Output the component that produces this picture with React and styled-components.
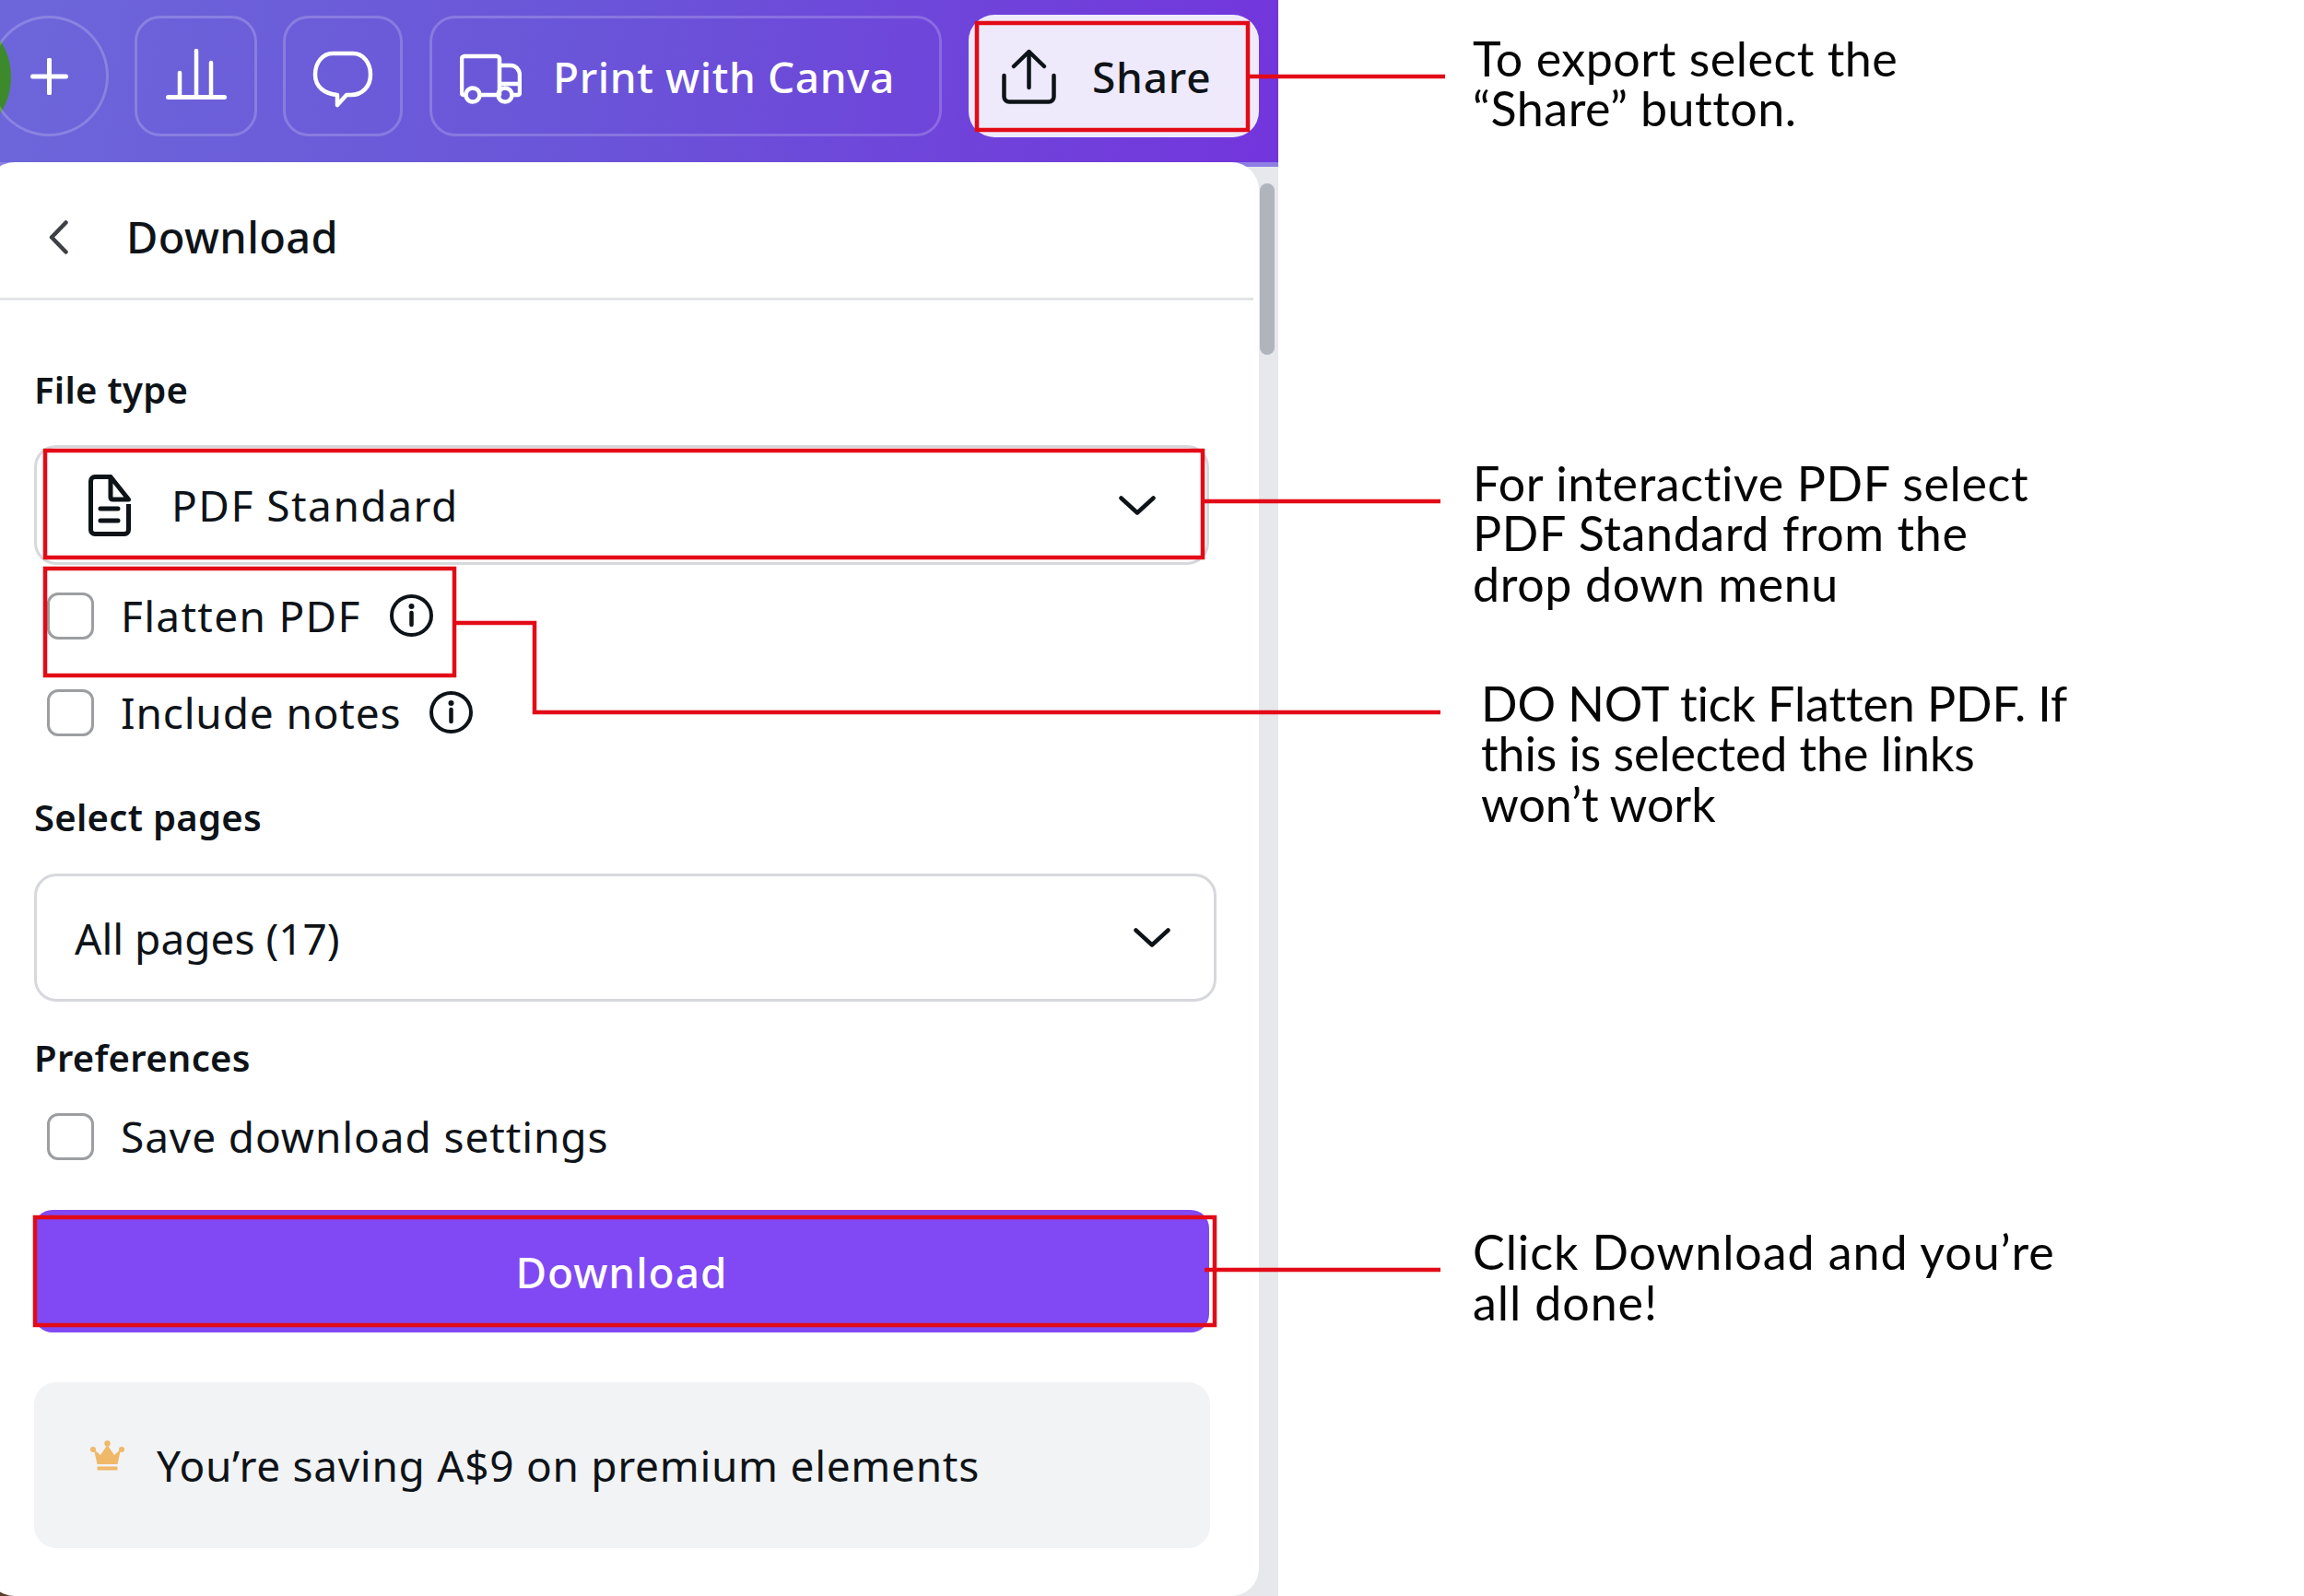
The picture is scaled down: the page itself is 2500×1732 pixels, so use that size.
import React from "react";
import styled, { createGlobalStyle } from "styled-components";

const GlobalStyle = createGlobalStyle`
  html, body {
    margin: 0;
    padding: 0;
    background: #fff;
  }
  * {
    box-sizing: border-box;
  }
`;

const Page = styled.div`
  position: relative;
  display: flex;
  width: 2500px;
  height: 1732px;
  overflow: hidden;
  background: #fff;
  font-family: "Noto Sans", sans-serif;
  color: #0e1318;
`;

const Editor = styled.div`
  display: flex;
  flex-direction: column;
  width: 1387px;
  height: 100%;
`;

const Toolbar = styled.div`
  display: flex;
  align-items: flex-start;
  flex: 0 0 176px;
  padding-top: 17px;
  background: linear-gradient(100deg, #6d66da 0%, #6a55d8 45%, #7335dc 100%);
`;

const Avatar = styled.div`
  flex: 0 0 145px;
  height: 145px;
  margin: -6px -24px 0 -133px;
  border-radius: 50%;
  background: #3c8a2b;
`;

const ToolButton = styled.div`
  display: flex;
  align-items: center;
  justify-content: ${({ $inner }) => ($inner ? "flex-start" : "center")};
  flex: 0 0 ${({ $width }) => $width}px;
  height: 131px;
  margin-right: ${({ $gap }) => $gap}px;
  padding-left: ${({ $inner }) => ($inner ? 30 : 0)}px;
  gap: ${({ $inner }) => $inner || 0}px;
  border: 3px solid rgba(255, 255, 255, 0.2);
  border-radius: ${({ $round }) => ($round ? "50%" : "28px")};
  color: #fff;
  font-size: 46px;
  font-weight: 500;
  letter-spacing: 0.6px;
`;

const ShareButton = styled.div`
  display: flex;
  align-items: center;
  gap: 39px;
  flex: 0 0 315px;
  height: 133px;
  margin-top: -1px;
  padding-left: 36px;
  border-radius: 28px;
  background: #efeafb;
  font-size: 46px;
  font-weight: 500;
  letter-spacing: 0.8px;
`;

const Workspace = styled.div`
  display: flex;
  flex: 1;
  min-height: 0;
  background:
    linear-gradient(90deg, #5a3a28 0 30px, transparent 30px) left bottom / 30px 30px no-repeat,
    linear-gradient(180deg, #8d7fe4 0 5px, #e6e8ec 5px);
`;

const Panel = styled.div`
  flex: 0 0 1380px;
  margin-left: -14px;
  border-radius: 30px;
  background: #fff;
`;

const PanelHeader = styled.div`
  display: flex;
  align-items: center;
  gap: 63px;
  height: 150px;
  width: 1374px;
  padding: 15px 0 0 67px;
  border-bottom: 3px solid #e2e4e7;
  font-size: 47px;
  font-weight: 500;
  letter-spacing: 0.4px;
`;

const PanelBody = styled.div`
  display: flex;
  flex-direction: column;
  padding: 73px 0 0 51px;
`;

const FieldLabel = styled.div`
  height: 48px;
  margin-top: ${({ $top }) => $top || 0}px;
  font-size: 40px;
  line-height: 48px;
  font-weight: 560;
  letter-spacing: 0.3px;
`;

const Select = styled.div`
  display: flex;
  align-items: center;
  justify-content: space-between;
  width: ${({ $wide }) => ($wide ? 1283 : 1275)}px;
  height: ${({ $height }) => $height}px;
  margin-top: ${({ $top }) => $top}px;
  padding: 0 ${({ $pr }) => $pr}px 0 ${({ $pl }) => $pl}px;
  border: 3px solid #d6d8dc;
  border-radius: 24px;
  font-size: 46px;
  letter-spacing: ${({ $wide }) => ($wide ? 0 : 1.5)}px;
`;

const SelectValue = styled.div`
  display: flex;
  align-items: center;
  gap: 44px;
`;

const CheckRow = styled.div`
  display: flex;
  align-items: center;
  height: 52px;
  margin-top: ${({ $top }) => $top}px;
  padding-left: 14px;
  font-size: 46px;
  letter-spacing: ${({ $track }) => $track}px;
`;

const CheckBox = styled.span`
  flex: 0 0 51px;
  height: 51px;
  margin-right: 29px;
  border: 3px solid #9c9ea1;
  border-radius: 12px;
`;

const InfoWrap = styled.span`
  display: inline-flex;
  margin-left: 31px;
`;

const DownloadButton = styled.div`
  display: flex;
  align-items: center;
  justify-content: center;
  width: 1275px;
  height: 133px;
  margin-top: 54px;
  border-radius: 20px;
  background: #8049f4;
  color: #fff;
  font-size: 46px;
  font-weight: 500;
  letter-spacing: 1px;
`;

const Promo = styled.div`
  display: flex;
  align-items: center;
  gap: 35px;
  width: 1276px;
  height: 180px;
  margin-top: 54px;
  padding-left: 61px;
  border-radius: 24px;
  background: #f2f3f5;
  font-size: 46px;
  letter-spacing: 0.7px;
`;

const CrownWrap = styled.span`
  display: inline-flex;
  margin-top: -22px;
`;

const ScrollTrack = styled.div`
  flex: 1;
  padding: 23px 4px 0 1px;
`;

const ScrollThumb = styled.div`
  height: 186px;
  border-radius: 8px;
  background: #b0b4bc;
`;

const Notes = styled.div`
  display: flex;
  flex-direction: column;
  padding: 36px 0 0 211px;
  font-family: "Lato", sans-serif;
  font-size: 52px;
  line-height: 54.4px;
  color: #060606;
`;

const Note = styled.div`
  margin-top: ${({ $top }) => $top || 0}px;
  margin-left: ${({ $left }) => $left || 0}px;
  letter-spacing: ${({ $track }) => $track}px;
  white-space: nowrap;
`;

const Callouts = styled.svg`
  position: absolute;
  inset: 0;
  pointer-events: none;
`;

const PlusIcon = () => (
  <svg width="41" height="40" viewBox="0 0 41 40" fill="none" stroke="#fff" strokeWidth="5" strokeLinecap="round">
    <path d="M20.5 2v36M2.5 20h36" />
  </svg>
);

const BarsIcon = () => (
  <svg width="66" height="59" viewBox="0 0 66 59" fill="none" stroke="#fff" strokeLinecap="round">
    <path d="M15 26v26M33 2v50M49 15v37" strokeWidth="4.5" />
    <path d="M2.5 52.5h61" strokeWidth="5" />
  </svg>
);

const BubbleIcon = () => (
  <svg width="66" height="68" viewBox="0 -6 66 68" fill="none" stroke="#fff" strokeWidth="4.5" strokeLinejoin="round">
    <path d="M22 3h22c11 0 19 10 19 23 0 13-9 22-21 22h-5l-10 11v-11C13 47 3 39 3 26 3 13 11 3 22 3z" />
  </svg>
);

const TruckIcon = () => (
  <svg width="67" height="61" viewBox="0 -7 67 61" fill="none" stroke="#fff" strokeWidth="4.5" strokeLinejoin="round">
    <path d="M6.500 44H4a2 2 0 0 1-2-2V5a3 3 0 0 1 3-3h35a3 3 0 0 1 3 3v39H21" />
    <path d="M43 12h12c6 0 10 5 10 11v19a2 2 0 0 1-2 2h-6" />
    <path d="M43 32h22M43 44h-1" />
    <circle cx="14" cy="44" r="7.500" />
    <circle cx="49" cy="44" r="7.500" />
  </svg>
);

const ShareIcon = () => (
  <svg width="59" height="60" viewBox="0 0 59 60" fill="none" stroke="#0e1318" strokeWidth="4.5" strokeLinecap="round" strokeLinejoin="round">
    <path d="M29.500 42V3M13 19 29.500 3 46 19" />
    <path d="M2.500 29v23a5.500 5.500 0 0 0 5.500 5.500h43a5.500 5.500 0 0 0 5.500-5.500V29" />
  </svg>
);

const BackIcon = () => (
  <svg width="21" height="37" viewBox="0 0 21 37" fill="none" stroke="#3d4045" strokeWidth="4.500" strokeLinecap="round" strokeLinejoin="round">
    <path d="M18.500 2.500 3 18.500l15.500 16" />
  </svg>
);

const FileIcon = () => (
  <svg width="46" height="67" viewBox="0 0 46 67" fill="none" stroke="#0e1318" strokeWidth="5" strokeLinejoin="round">
    <path d="M24 2.500H7a4.500 4.500 0 0 0-4.500 4.500v53A4.500 4.500 0 0 0 7 64.500h32a4.500 4.500 0 0 0 4.500-4.500V32" />
    <path d="M24 2.500V25a2 2 0 0 0 2 2h17.500z" />
    <path d="M13 37h19M13 50h19" strokeLinecap="round" />
  </svg>
);

const ChevronIcon = () => (
  <svg width="40" height="21" viewBox="0 0 40 21" fill="none" stroke="#0e1318" strokeWidth="4.500" strokeLinecap="round" strokeLinejoin="round">
    <path d="M2.500 2.500 20 18.500 37.500 2.500" />
  </svg>
);

const InfoIcon = () => (
  <svg width="47" height="46" viewBox="0 0 47 46" fill="none" stroke="#0e1318" strokeWidth="4">
    <ellipse cx="23.500" cy="23" rx="21.500" ry="21" />
    <path d="M23.500 20v13" strokeWidth="4.500" strokeLinecap="round" />
    <circle cx="23.500" cy="13" r="3" fill="#0e1318" stroke="none" />
  </svg>
);

const CrownIcon = () => (
  <svg width="37" height="33" viewBox="0 0 37 33" fill="#f0b869">
    <circle cx="18.500" cy="3.500" r="3.200" />
    <circle cx="3" cy="10" r="3" />
    <circle cx="34" cy="10" r="3" />
    <path d="M18.500 5 26 16l7-6-3.500 16h-22L4 10l7 6z" />
    <rect x="7.500" y="28.500" width="22" height="4" rx="1" />
  </svg>
);

const App = () => {
  return (
    <Page>
      <GlobalStyle />
      <Editor>
        <Toolbar>
          <Avatar />
          <ToolButton $round $width={130} $gap={28}>
            <PlusIcon />
          </ToolButton>
          <ToolButton $width={133} $gap={28}>
            <BarsIcon />
          </ToolButton>
          <ToolButton $width={130} $gap={29}>
            <BubbleIcon />
          </ToolButton>
          <ToolButton $width={556} $gap={29} $inner={34}>
            <TruckIcon />
            Print with Canva
          </ToolButton>
          <ShareButton>
            <ShareIcon />
            Share
          </ShareButton>
        </Toolbar>
        <Workspace>
          <Panel>
            <PanelHeader>
              <BackIcon />
              Download
            </PanelHeader>
            <PanelBody>
              <FieldLabel>File type</FieldLabel>
              <Select $top={36} $height={130} $pl={56} $pr={55}>
                <SelectValue>
                  <FileIcon />
                  PDF Standard
                </SelectValue>
                <ChevronIcon />
              </Select>
              <CheckRow $top={29} $track={1.3}>
                <CheckBox />
                Flatten PDF
                <InfoWrap>
                  <InfoIcon />
                </InfoWrap>
              </CheckRow>
              <CheckRow $top={53} $track={0.85}>
                <CheckBox />
                Include notes
                <InfoWrap>
                  <InfoIcon />
                </InfoWrap>
              </CheckRow>
              <FieldLabel $top={64}>Select pages</FieldLabel>
              <Select $wide $top={37} $height={139} $pl={41} $pr={47}>
                All pages (17)
                <ChevronIcon />
              </Select>
              <FieldLabel $top={37}>Preferences</FieldLabel>
              <CheckRow $top={35} $track={0.9}>
                <CheckBox />
                Save download settings
              </CheckRow>
              <DownloadButton>Download</DownloadButton>
              <Promo>
                <CrownWrap>
                  <CrownIcon />
                </CrownWrap>
                You’re saving A$9 on premium elements
              </Promo>
            </PanelBody>
          </Panel>
          <ScrollTrack>
            <ScrollThumb />
          </ScrollTrack>
        </Workspace>
      </Editor>
      <Notes>
        <Note $track={0.5}>
          To export select the
          <br />
          “Share” button.
        </Note>
        <Note $top={352} $track={0.6}>
          For interactive PDF select
          <br />
          PDF Standard from the
          <br />
          drop down menu
        </Note>
        <Note $top={76} $left={9} $track={-0.1}>
          DO NOT tick Flatten PDF. If
          <br />
          this is selected the links
          <br />
          won’t work
        </Note>
        <Note $top={432} $track={0.9}>
          Click Download and you’re
          <br />
          all done!
        </Note>
      </Notes>
      <Callouts width="2500" height="1732" viewBox="0 0 2500 1732" fill="none" stroke="#e30a17" strokeWidth="4.5">
        <rect x="1060" y="25" width="294" height="116" />
        <path d="M1356 83H1568" />
        <rect x="49" y="489" width="1256" height="116" />
        <path d="M1307 544H1563" />
        <rect x="49" y="617" width="444" height="116" />
        <path d="M495 676H580V773H1563" />
        <rect x="38" y="1321" width="1280" height="117" />
        <path d="M1307 1378H1563" />
      </Callouts>
    </Page>
  );
};

export default App;
